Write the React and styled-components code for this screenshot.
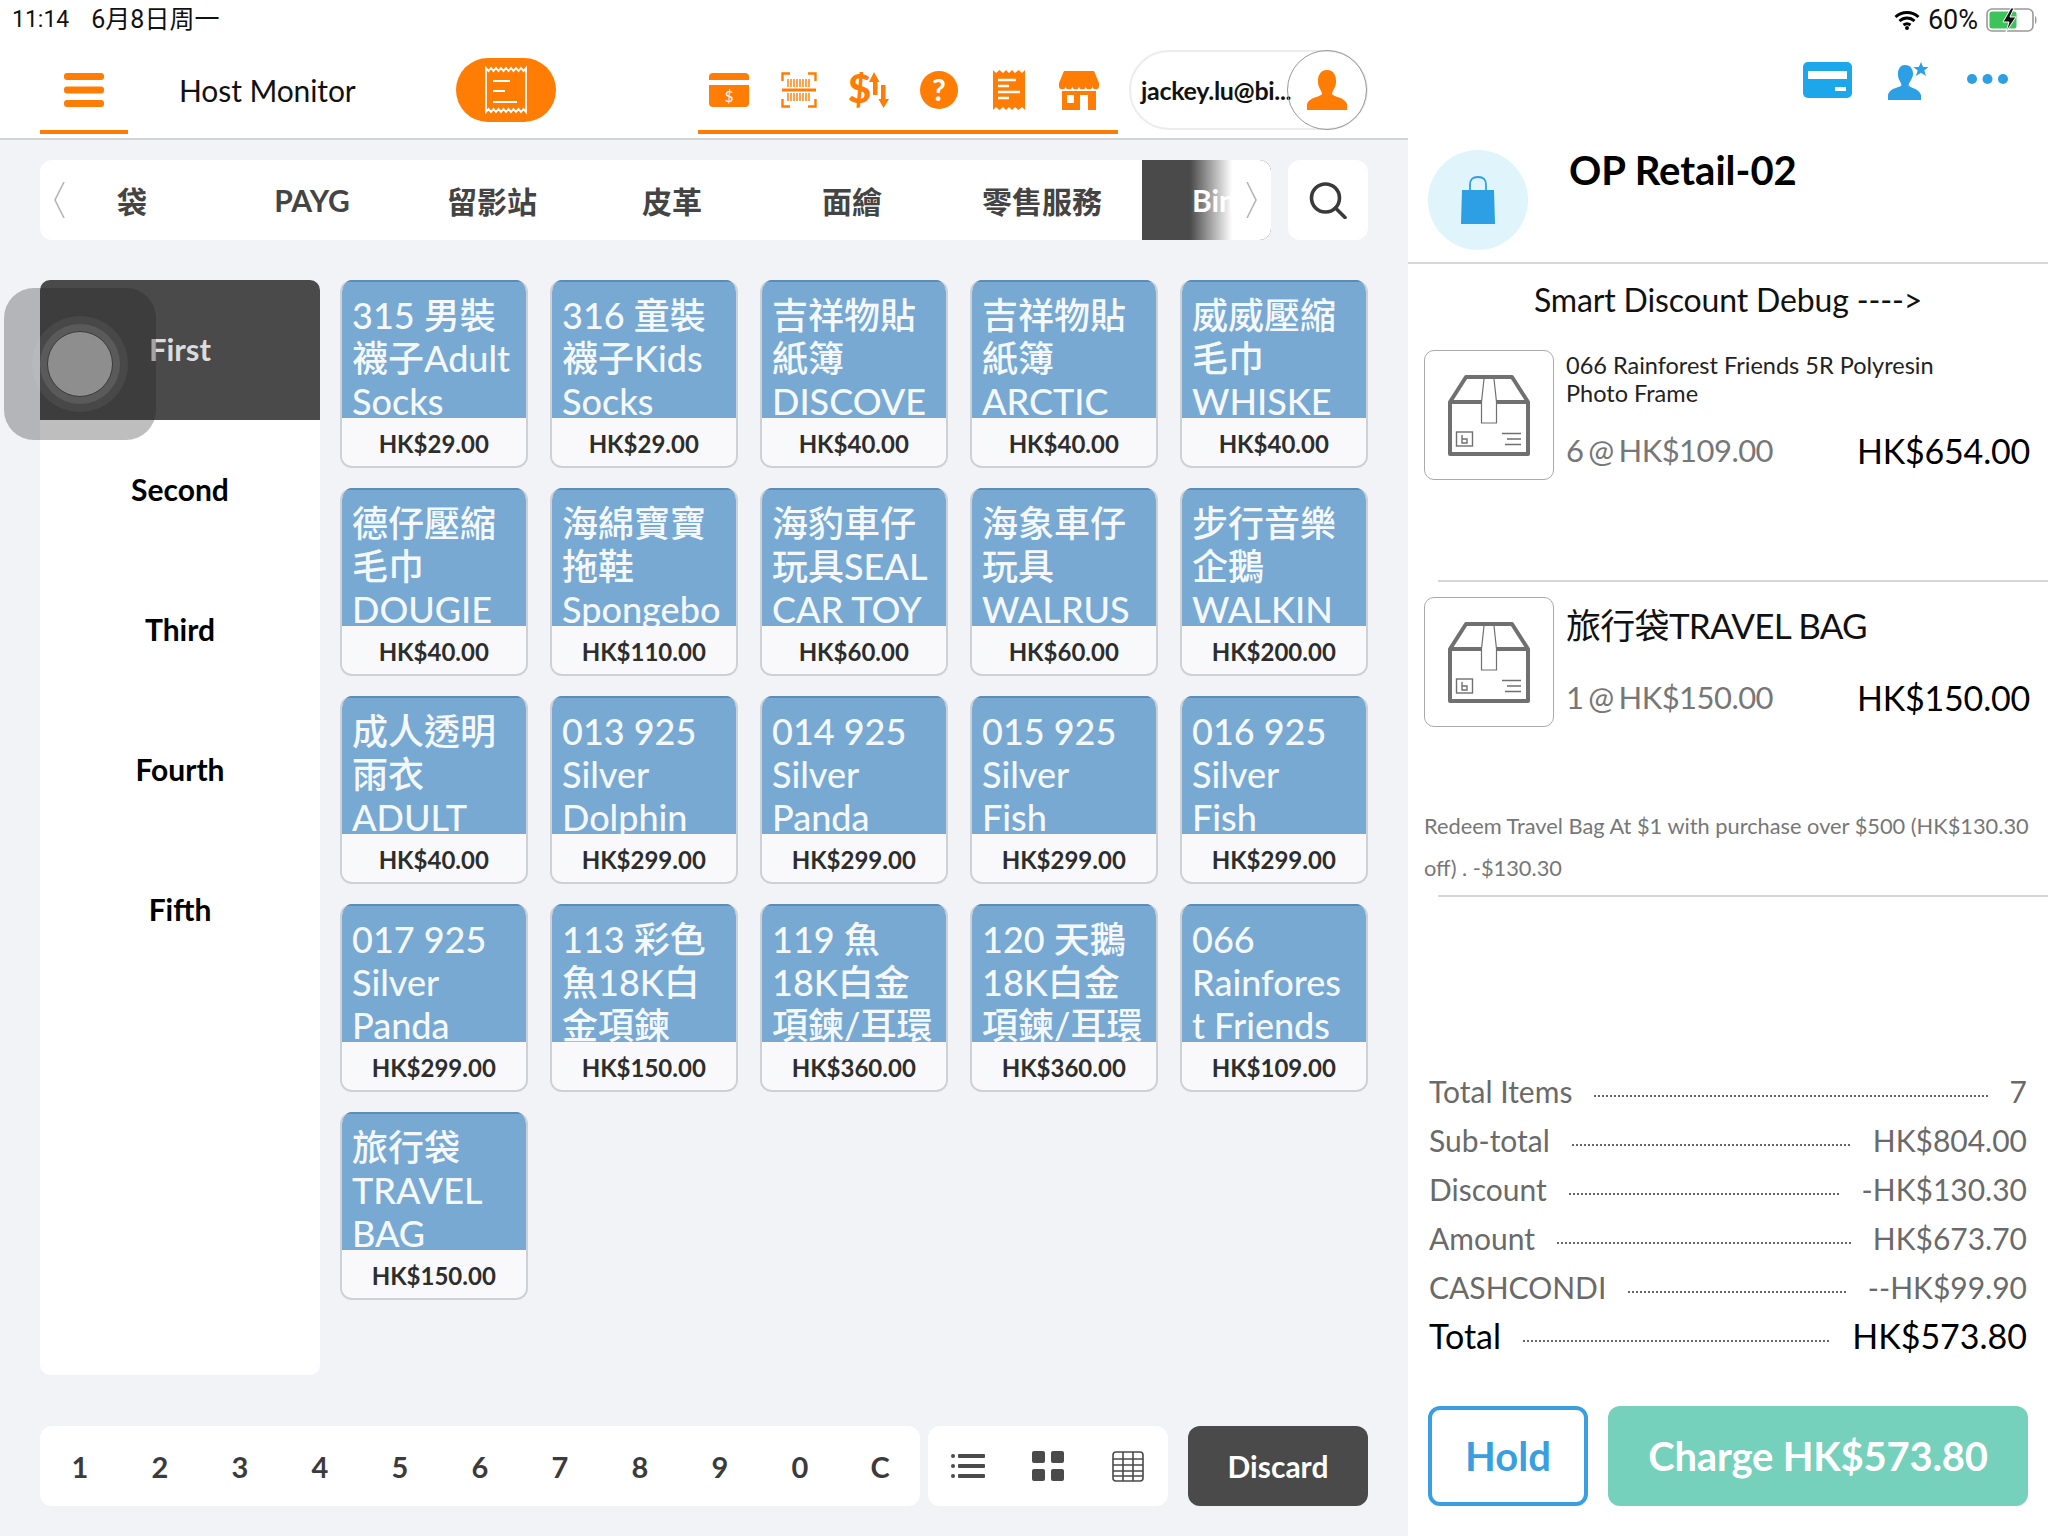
import React from 'react';
import styled, { createGlobalStyle } from 'styled-components';

const FONT = `"Lato", "Noto Sans CJK TC", sans-serif`;
const ORANGE = '#ff7c05';
const BLUE = '#2c9fe5';

const Global = createGlobalStyle`
  html, body { margin: 0; padding: 0; background: #fff; }
  body { font-family: ${FONT}; }
  * { box-sizing: border-box; }
`;

const Screen = styled.div`
  width: 2048px; height: 1536px; background: #fff; display: flex; flex-direction: column; overflow: hidden; position: relative;
`;
const StatusBar = styled.div`
  height: 40px; flex: none; display: flex; align-items: center; justify-content: space-between; padding: 0 10px 0 12px;
  font-family: "Roboto", "Noto Sans CJK SC", sans-serif; font-size: 23px; color: #111;
`;
const StatusLeft = styled.div`display: flex; gap: 22px; align-items: center; line-height: 30px;`;
const StatusDate = styled.span`font-size: 25px;`;
const StatusRight = styled.div`display: flex; align-items: center; gap: 8px; font-size: 27px;`;
const Body = styled.div`flex: 1; display: grid; grid-template-columns: 1408px 640px; min-height: 0;`;
const Left = styled.div`display: flex; flex-direction: column; background: #f1f3f7; min-height: 0;`;
const Header = styled.header`
  height: 100px; flex: none; background: #fff; border-bottom: 2px solid #d3d4d6; display: flex; padding: 0 0 4px 40px; position: relative;
`;
const HeaderTab = styled.div`
  height: 94px; flex: none; display: flex; align-items: center; justify-content: center; border-bottom: 4px solid ${ORANGE}; padding-top: 10px;
`;
const MenuTab = styled(HeaderTab)`width: 88px;`;
const HostTitle = styled.div`
  font-size: 30px; letter-spacing: -0.1px; color: #111; margin-left: 51px; width: 277px; height: 94px; line-height: 100px; flex: none; white-space: nowrap;
`;
const ReceiptPill = styled.div`
  width: 100px; height: 64px; margin-top: 18px; border-radius: 32px / 32px; background: ${ORANGE}; display: flex; align-items: center; justify-content: center; flex: none;
`;
const ToolTabs = styled(HeaderTab)`width: 420px; margin-left: 142px; justify-content: flex-start;`;
const ToolSlot = styled.div`width: 70px; padding-right: 8px; display: flex; justify-content: center; align-items: center; flex: none;`;
const UserPill = styled.div`
  position: relative; width: 239px; height: 80px; margin-top: 10px; margin-left: 11px; border: 2px solid #ececec; border-radius: 40px; flex: none;
  display: flex; align-items: center; padding-left: 10px; font-size: 25px; font-weight: 700; letter-spacing: -0.3px; color: #111; white-space: nowrap;
`;
const Avatar = styled.div`
  position: absolute; right: -1px; top: -2px; width: 80px; height: 80px; border-radius: 50%; border: 1px solid #999; display: flex; align-items: center; justify-content: center;
`;

const CategoryRow = styled.div`display: flex; gap: 17px; padding: 20px 40px 0; flex: none;`;
const CategoryBar = styled.div`
  position: relative; width: 1231px; height: 80px; background: #fff; border-radius: 12px; overflow: hidden; display: flex; padding-left: 2px;
`;
const CatTab = styled.div`
  height: 80px; min-width: ${p => (p.$wide ? 200 : 180)}px; flex: none; display: flex; align-items: center; justify-content: ${p => (p.$active ? 'flex-start' : 'center')};
  padding-left: ${p => (p.$active ? 50 : 0)}px; font-size: 30px; font-weight: 700; color: ${p => (p.$active ? '#fff' : '#444')}; background: ${p => (p.$active ? '#4a4a4a' : 'transparent')};
`;
const Fade = styled.div`
  position: absolute; right: 0; top: 0; bottom: 0; width: 81px; background: linear-gradient(90deg, rgba(255,255,255,0), #fff 52%); display: flex; align-items: center; justify-content: flex-end; padding-right: 14px;
`;
const LeftChev = styled.div`position: absolute; left: 14px; top: 22px; display: flex;`;
const SearchBox = styled.div`width: 80px; height: 80px; background: #fff; border-radius: 12px; display: flex; align-items: center; justify-content: center; flex: none;`;

const Middle = styled.div`display: flex; gap: 20px; padding: 40px 40px 0; flex: none;`;
const Sidebar = styled.nav`width: 280px; height: 1095px; background: #fff; border-radius: 10px; overflow: hidden; flex: none;`;
const SideItem = styled.div`
  height: 140px; display: flex; align-items: center; justify-content: center; font-size: ${p => (p.$active ? 31 : 30)}px; font-weight: 700; padding-bottom: 2px;
  color: ${p => (p.$active ? '#dcdcdc' : '#000')}; background: ${p => (p.$active ? '#4a4a4a' : 'transparent')};
`;
const Grid = styled.div`
  width: 1027.5px; display: grid; grid-template-columns: repeat(5, 187.5px); grid-auto-rows: 187.5px; column-gap: 22.5px; row-gap: 20.5px; align-content: start;
`;
const Card = styled.div`
  border-radius: 12px; overflow: hidden; background: #f8f9fb; border: 2px solid #cdd0d4; border-top: 0; position: relative; margin: 0;
`;
const CardName = styled.div`
  height: 138px; background: #77a9d3; border-top: 2px solid #5d8db5; margin: 0 -2px; padding: 12px 0 0 12px; color: #f4f8fb; font-size: 36px; font-weight: 500; line-height: 43px;
`;
const NameLine = styled.div`white-space: nowrap;`;
const Price = styled.div`
  position: relative; height: 47px; display: flex; align-items: center; justify-content: center; background: rgba(248,249,251,.78); font-size: 24px; font-weight: 700; color: #2d2d2d; margin: 0 -2px; padding-top: 3px;
`;

const BottomBar = styled.div`display: flex; padding: 51px 40px 0; flex: none;`;
const NumPad = styled.div`
  width: 880px; height: 80px; background: #fff; border-radius: 12px; display: grid; grid-template-columns: repeat(11, 80px); flex: none;
`;
const Digit = styled.div`display: flex; align-items: center; justify-content: center; font-size: 29px; font-weight: 700; color: #3b3b3b;`;
const ViewPad = styled.div`width: 240px; height: 80px; margin-left: 8px; background: #fff; border-radius: 12px; display: flex; flex: none;`;
const ViewSlot = styled.div`width: 80px; display: flex; align-items: center; justify-content: center;`;
const DiscardBtn = styled.div`
  width: 180px; height: 80px; margin-left: 20px; background: #4a4a4a; border-radius: 12px; color: #fff; font-size: 30px; font-weight: 700; display: flex; align-items: center; justify-content: center; flex: none;
`;

const Right = styled.aside`display: flex; flex-direction: column; background: #fff; min-height: 0;`;
const RightTools = styled.div`height: 110px; flex: none; position: relative; display: flex; padding-top: 22px;`;
const ToolCard = styled.div`margin-left: 395px; width: 49px; display: flex;`;
const ToolUser = styled.div`margin-left: 36px; width: 46px; display: flex;`;
const ToolDots = styled.div`margin-left: 33px; display: flex; padding-top: 11px;`;
const OrderHead = styled.div`height: 114px; flex: none; border-bottom: 2px solid #d6d6d6; padding-left: 20px; display: flex; gap: 41px;`;
const BagCircle = styled.div`width: 100px; height: 100px; border-radius: 50%; background: #e0f5fb; display: flex; align-items: center; justify-content: center; flex: none;`;
const OrderTitle = styled.h1`margin: 0; font-size: 40px; font-weight: 700; line-height: 40px; color: #000;`;
const DebugLine = styled.div`height: 86px; flex: none; padding-top: 16px; text-align: center; font-size: 32px; line-height: 40px; color: #111; letter-spacing: -0.15px;`;
const Item = styled.div`display: flex; gap: 12px; padding: 0 18px 0 16px; height: ${p => p.$h}px; flex: none;`;
const Thumb = styled.div`width: 130px; height: 130px; border: 1px solid #aaa; border-radius: 10px; display: flex; align-items: center; justify-content: center; flex: none;`;
const ItemInfo = styled.div`flex: 1; height: 122px; display: flex; flex-direction: column; justify-content: space-between;`;
const ItemName = styled.div`
  font-size: ${p => (p.$large ? 35 : 23.5)}px; line-height: ${p => (p.$large ? 40 : 28)}px; padding-top: ${p => (p.$large ? 8 : 1)}px; color: ${p => (p.$large ? '#111' : '#222')};
  letter-spacing: ${p => (p.$large ? -0.7 : 0)}px;
`;
const ItemFoot = styled.div`display: flex; justify-content: space-between; align-items: center; height: 44px;`;
const ItemQty = styled.div`font-size: 31px; color: #777; word-spacing: -2.5px; letter-spacing: -0.55px;`;
const ItemTotal = styled.div`font-size: 34px; color: #000; letter-spacing: -0.2px;`;
const Rule = styled.div`height: 2px; background: #d6d6d6; margin: ${p => p.$m}; flex: none;`;
const Promo = styled.div`padding: 0 10px 0 16px; font-size: 21.8px; line-height: 42px; color: #777; flex: none;`;
const Summary = styled.div`margin-top: auto; padding: 0 21px 0 21px; flex: none;`;
const SumRow = styled.div`
  height: 49px; display: flex; align-items: center; font-size: ${p => (p.$strong ? 34 : 30)}px; color: ${p => (p.$strong ? '#000' : '#6a6a6a')};
`;
const Leader = styled.div`
  flex: 1; height: 2px; margin: 10px 22px 0; background: repeating-linear-gradient(90deg, #666 0 2px, transparent 2px 4px);
`;
const Actions = styled.div`display: flex; gap: 20px; padding: 46px 20px 30px; flex: none;`;
const HoldBtn = styled.div`
  width: 160px; height: 100px; border: 4px solid #3a9fe0; border-radius: 12px; color: #3a9fe0; font-size: 40px; font-weight: 700; display: flex; align-items: center; justify-content: center; flex: none;
`;
const ChargeBtn = styled.div`
  flex: 1; height: 100px; border-radius: 12px; background: #75d1bc; color: #fff; font-size: 40px; font-weight: 700; letter-spacing: -0.2px; display: flex; align-items: center; justify-content: center;
`;

const Hamburger = () => (
  <svg width="40" height="34" viewBox="0 0 40 34" fill={ORANGE}>
    <rect x="0" y="0" width="40" height="7" rx="3" /><rect x="0" y="13.5" width="40" height="7" rx="3" /><rect x="0" y="27" width="40" height="7" rx="3" />
  </svg>
);
const zig = (y, up) => {
  let s = '';
  for (let i = 0; i < 8; i++) s += `L${1 + i * 5 + 2.5} ${up ? y - 3 : y + 3} L${1 + (i + 1) * 5} ${y} `;
  return s;
};
const ReceiptOutline = () => (
  <svg width="42" height="52" viewBox="0 0 42 52" fill="none" stroke="#fff" strokeWidth="1.8">
    <path d={`M1 4 ${zig(4, false)} V48 ${Array.from({ length: 8 }, (_, i) => `L${41 - i * 5 - 2.5} 45 L${41 - (i + 1) * 5} 48`).join(' ')} Z`} />
    <path d="M8 17H25M8 27H20M8 38H32" strokeWidth="2" />
  </svg>
);
const CashCard = () => (
  <svg width="40" height="34" viewBox="0 0 40 34">
    <rect width="40" height="34" rx="4" fill={ORANGE} />
    <rect x="0" y="7" width="40" height="5" fill="#fff" />
    <text x="20" y="29" textAnchor="middle" fontSize="15" fill="#fff" fontFamily="Lato">$</text>
  </svg>
);
const Scan = () => (
  <svg width="36" height="36" viewBox="0 0 36 36" fill="none" stroke={ORANGE} strokeWidth="2.4">
    <path d="M9 1.5H1.5V9M27 1.5H34.5V9M9 34.5H1.5V27M27 34.5H34.5V27" />
    <path d="M7 7V15M10 7V15M13 7V15M16 7V15M19 7V15M22 7V15M25 7V15M28 7V15M7 21V29M10 21V29M13 21V29M16 21V29M19 21V29M22 21V29M25 21V29M28 21V29" strokeWidth="1.4" />
    <path d="M1 18H35" strokeWidth="3" />
  </svg>
);
const Exchange = () => (
  <svg width="40" height="36" viewBox="0 0 40 36" fill={ORANGE}>
    <text x="-1" y="31" fontSize="40" fontWeight="900" fontFamily="Lato">$</text>
    <path d="M25 0L30.500 10H28.500V23H24V10H20ZM32 13H36.500V27H40L34.500 36L29.500 27H32Z" />
  </svg>
);
const Help = () => (
  <svg width="38" height="38" viewBox="0 0 38 38">
    <circle cx="19" cy="19" r="19" fill={ORANGE} />
    <text x="19" y="30" textAnchor="middle" fontSize="30" fontWeight="700" fill="#fff" fontFamily="Lato">?</text>
  </svg>
);
const Bill = () => (
  <svg width="32" height="40" viewBox="0 0 32 40">
    <path d="M0 0L3 3L6.5 0L10 3L13 0L16 3L19 0L22 3L25.5 0L29 3L32 0V40L29 37L25.5 40L22 37L19 40L16 37L13 40L10 37L6.5 40L3 37L0 40Z" fill={ORANGE} />
    <path d="M5 10H23M5 16H16M5 22H27M5 28H16" stroke="#fff" strokeWidth="2.4" />
  </svg>
);
const Shop = () => (
  <svg width="40" height="39" viewBox="0 0 40 39" fill={ORANGE}>
    <path d="M5 0H35L40 12V15H0V12Z" />
    <path d="M0 15a3.3 3.3 0 0 0 6.6 0a3.3 3.3 0 0 0 6.7 0a3.3 3.3 0 0 0 6.7 0a3.3 3.3 0 0 0 6.7 0a3.3 3.3 0 0 0 6.7 0a3.3 3.3 0 0 0 6.6 0Z" />
    <path fillRule="evenodd" d="M3 20H37V39H3ZM8 24V32H15V24ZM21 24V39H29V24Z" />
  </svg>
);
const Person = ({ color, star }) => (
  <svg width={star ? 46 : 40} height={star ? 38 : 40} viewBox={star ? '0 0 46 38' : '0 0 40 40'} fill={color}>
    {star ? (
      <>
        <path d="M17 3C11 3 9.500 9 10 14C10.500 18 13 20 13.500 23C13 26 2 25 0 33V38H33V33C31 26 21 26 20.500 23C21 20 24.500 17 25 13C25.500 8 23 3 17 3Z" />
        <path d="M33 0L35.200 5H40.500L36.300 8.500L38 14L33 10.800L28 14L29.700 8.500L25.500 5H30.800Z" />
      </>
    ) : (
      <path d="M20 0C13 0 10.500 6 11 13C11.500 18 14.500 20 15 24C14 27 2 27 0 34V40H40V34C38 27 26 27 25 24C25.500 20 28.500 18 29 13C29.500 6 27 0 20 0Z" />
    )}
  </svg>
);
const Chevron = ({ right }) => (
  <svg width="11" height="36" viewBox="0 0 11 36" fill="none" stroke="#b5b5b5" strokeWidth="1.6">
    <path d={right ? 'M1 0L10 18L1 36' : 'M10 0L1 18L10 36'} />
  </svg>
);
const SearchIcon = () => (
  <svg width="38" height="37" viewBox="0 0 38 37" fill="none" stroke="#3a3a3a" strokeWidth="3.6">
    <circle cx="16.500" cy="16" r="14" /><path d="M26.500 26L36 35.500" strokeLinecap="round" />
  </svg>
);
const ListIcon = () => (
  <svg width="34" height="26" viewBox="0 0 34 26" fill="#4a4a4a">
    <circle cx="2" cy="3" r="2" /><circle cx="2" cy="13" r="2" /><circle cx="2" cy="23" r="2" />
    <rect x="7" y="1" width="27" height="4" rx="1" /><rect x="7" y="11" width="27" height="4" rx="1" /><rect x="7" y="21" width="27" height="4" rx="1" />
  </svg>
);
const TilesIcon = () => (
  <svg width="32" height="30" viewBox="0 0 32 30" fill="#4a4a4a">
    <rect width="13" height="12" rx="2" /><rect x="19" width="13" height="12" rx="2" /><rect y="18" width="13" height="12" rx="2" /><rect x="19" y="18" width="13" height="12" rx="2" />
  </svg>
);
const TableIcon = () => (
  <svg width="32" height="31" viewBox="0 0 32 31" fill="none" stroke="#4a4a4a" strokeWidth="1.6">
    <rect x="1" y="1" width="30" height="29" rx="3" />
    <path d="M1 8H31M1 14H31M1 20H31M1 25H31M11 1V30M21 1V30" />
  </svg>
);
const WifiIcon = () => (
  <svg width="26" height="20" viewBox="0 0 26 20" fill="none" stroke="#000" strokeWidth="3">
    <path d="M1.500 7C8 1 18 1 24.500 7M5.500 11C10 7 16 7 20.500 11M9.500 15C11.500 13.500 14.500 13.500 16.500 15" />
    <circle cx="13" cy="18" r="2" fill="#000" stroke="none" />
  </svg>
);
const BatteryIcon = () => (
  <svg width="52" height="24" viewBox="0 0 52 24">
    <rect x="1" y="1" width="46" height="22" rx="5" fill="none" stroke="#999" strokeWidth="1.6" />
    <rect x="3.500" y="3.500" width="27" height="17" rx="2.500" fill="#3cc45a" />
    <path d="M49 8c2 1 2 7 0 8Z" fill="#999" />
    <path d="M25 0L17 14H23L20 24L30 9H24L28 0Z" fill="#111" stroke="#fff" strokeWidth="1" />
  </svg>
);
const BlueCard = () => (
  <svg width="49" height="36" viewBox="0 0 49 36">
    <rect width="49" height="36" rx="5" fill="#1ba7ea" />
    <rect x="5" y="9" width="39" height="8" fill="#fff" />
    <rect x="32" y="25" width="11" height="4" fill="#fff" />
  </svg>
);
const Dots = () => (
  <svg width="41" height="12" viewBox="0 0 41 12" fill={BLUE}>
    <circle cx="5" cy="6" r="5" /><circle cx="20.500" cy="6" r="5" /><circle cx="36" cy="6" r="5" />
  </svg>
);
const Bag = () => (
  <svg width="34" height="48" viewBox="0 0 34 48">
    <path d="M9 15V9C9 3 11.500 1 17 1C22.500 1 25 3 25 9V15" fill="none" stroke={BLUE} strokeWidth="1.800" />
    <path d="M1 14H33L34 48H0Z" fill={BLUE} />
  </svg>
);
const BoxIcon = () => (
  <svg width="82" height="81" viewBox="0 0 82 81" fill="none" stroke="#707070" strokeWidth="4">
    <path d="M2 27L18 2H64L80 27V79H2ZM2 27H80" strokeLinejoin="round" />
    <path d="M36 4L33.500 27V48H48.500V27L46 4" fill="#fff" strokeWidth="1.200" />
    <rect x="8.500" y="57" width="16" height="14" strokeWidth="1.400" />
    <path d="M14 60V68H19V64H14" strokeWidth="1.400" />
    <path d="M54 58.500H73M59 64H73M57 69.500H73" strokeWidth="1.400" />
  </svg>
);

const TABS = ['袋', 'PAYG', '留影站', '皮革', '面繪'];
const SIDE = ['Second', 'Third', 'Fourth', 'Fifth'];
const PRODUCTS = [
  [['315 男裝', '襪子Adult', 'Socks'], 'HK$29.00'],
  [['316 童裝', '襪子Kids', 'Socks'], 'HK$29.00'],
  [['吉祥物貼', '紙簿', 'DISCOVE', 'RY'], 'HK$40.00'],
  [['吉祥物貼', '紙簿', 'ARCTIC', 'SEAL'], 'HK$40.00'],
  [['威威壓縮', '毛巾', 'WHISKE', 'R'], 'HK$40.00'],
  [['德仔壓縮', '毛巾', 'DOUGIE', 'CARE'], 'HK$40.00'],
  [['海綿寶寶', '拖鞋', 'Spongebo', 'b'], 'HK$110.00'],
  [['海豹車仔', '玩具SEAL', 'CAR TOY'], 'HK$60.00'],
  [['海象車仔', '玩具', 'WALRUS', 'CAR TOY'], 'HK$60.00'],
  [['步行音樂', '企鵝', 'WALKIN', 'G'], 'HK$200.00'],
  [['成人透明', '雨衣', 'ADULT', 'RAINCOA'], 'HK$40.00'],
  [['013 925', 'Silver', 'Dolphin', 'Keychain'], 'HK$299.00'],
  [['014 925', 'Silver', 'Panda', 'Sharp'], 'HK$299.00'],
  [['015 925', 'Silver', 'Fish', 'Keychain'], 'HK$299.00'],
  [['016 925', 'Silver', 'Fish', 'Keychain'], 'HK$299.00'],
  [['017 925', 'Silver', 'Panda', 'Sharp'], 'HK$299.00'],
  [['113 彩色', '魚18K白', '金項鍊', 'g'], 'HK$150.00'],
  [['119 魚', '18K白金', '項鍊/耳環', '2'], 'HK$360.00'],
  [['120 天鵝', '18K白金', '項鍊/耳環', '2'], 'HK$360.00'],
  [['066', 'Rainfores', 't Friends', '5'], 'HK$109.00'],
  [['旅行袋', 'TRAVEL', 'BAG'], 'HK$150.00'],
];
const SUMMARY = [
  ['Total Items', '7'],
  ['Sub-total', 'HK$804.00'],
  ['Discount', '-HK$130.30'],
  ['Amount', 'HK$673.70'],
  ['CASHCONDI', '--HK$99.90'],
];

const TouchOverlay = styled.div`
  position: absolute; left: 4px; top: 288px; width: 152px; height: 152px; border-radius: 30px; background: rgba(30,30,30,.29); display: flex; align-items: center; justify-content: center;
`;
const Ring = styled.div`
  width: ${p => p.$s}px; height: ${p => p.$s}px; border-radius: 50%; background: ${p => p.$c}; border: ${p => p.$b || 'none'}; display: flex; align-items: center; justify-content: center;
`;

export default function App() {
  return (
    <Screen>
      <Global />
      <StatusBar>
        <StatusLeft><span>11:14</span><StatusDate>6月8日周一</StatusDate></StatusLeft>
        <StatusRight><WifiIcon /><span>60%</span><BatteryIcon /></StatusRight>
      </StatusBar>
      <Body>
        <Left>
          <Header>
            <MenuTab><Hamburger /></MenuTab>
            <HostTitle>Host Monitor</HostTitle>
            <ReceiptPill><ReceiptOutline /></ReceiptPill>
            <ToolTabs>
              <ToolSlot><CashCard /></ToolSlot>
              <ToolSlot><Scan /></ToolSlot>
              <ToolSlot><Exchange /></ToolSlot>
              <ToolSlot><Help /></ToolSlot>
              <ToolSlot><Bill /></ToolSlot>
              <ToolSlot><Shop /></ToolSlot>
            </ToolTabs>
            <UserPill>
              jackey.lu@bi...
              <Avatar><Person color={ORANGE} /></Avatar>
            </UserPill>
          </Header>
          <CategoryRow>
            <CategoryBar>
              {TABS.map(t => <CatTab key={t}>{t}</CatTab>)}
              <CatTab $wide>零售服務</CatTab>
              <CatTab $active>Bin</CatTab>
              <LeftChev><Chevron /></LeftChev>
              <Fade><Chevron right /></Fade>
            </CategoryBar>
            <SearchBox><SearchIcon /></SearchBox>
          </CategoryRow>
          <Middle>
            <Sidebar>
              <SideItem $active>First</SideItem>
              {SIDE.map(s => <SideItem key={s}>{s}</SideItem>)}
            </Sidebar>
            <Grid>
              {PRODUCTS.map(([lines, price], i) => (
                <Card key={i}>
                  <CardName>{lines.map((l, j) => <NameLine key={j}>{l}</NameLine>)}</CardName>
                  <Price>{price}</Price>
                </Card>
              ))}
            </Grid>
          </Middle>
          <BottomBar>
            <NumPad>
              {['1', '2', '3', '4', '5', '6', '7', '8', '9', '0', 'C'].map(d => <Digit key={d}>{d}</Digit>)}
            </NumPad>
            <ViewPad>
              <ViewSlot><ListIcon /></ViewSlot>
              <ViewSlot><TilesIcon /></ViewSlot>
              <ViewSlot><TableIcon /></ViewSlot>
            </ViewPad>
            <DiscardBtn>Discard</DiscardBtn>
          </BottomBar>
        </Left>
        <Right>
          <RightTools>
            <ToolCard><BlueCard /></ToolCard>
            <ToolUser><Person color={BLUE} star /></ToolUser>
            <ToolDots><Dots /></ToolDots>
          </RightTools>
          <OrderHead>
            <BagCircle><Bag /></BagCircle>
            <OrderTitle>OP Retail-02</OrderTitle>
          </OrderHead>
          <DebugLine>Smart Discount Debug ----&gt;</DebugLine>
          <Item $h={230}>
            <Thumb><BoxIcon /></Thumb>
            <ItemInfo>
              <ItemName>066 Rainforest Friends 5R Polyresin<br />Photo Frame</ItemName>
              <ItemFoot><ItemQty>6 @ HK$109.00</ItemQty><ItemTotal>HK$654.00</ItemTotal></ItemFoot>
            </ItemInfo>
          </Item>
          <Rule $m="0 0 15px 30px" />
          <Item $h={208}>
            <Thumb><BoxIcon /></Thumb>
            <ItemInfo>
              <ItemName $large>旅行袋TRAVEL BAG</ItemName>
              <ItemFoot><ItemQty>1 @ HK$150.00</ItemQty><ItemTotal>HK$150.00</ItemTotal></ItemFoot>
            </ItemInfo>
          </Item>
          <Promo>Redeem Travel Bag At $1 with purchase over $500 (HK$130.30 off) . -$130.30</Promo>
          <Rule $m="6px 0 0 30px" />
          <Summary>
            {SUMMARY.map(([k, v]) => (
              <SumRow key={k}><span>{k}</span><Leader /><span>{v}</span></SumRow>
            ))}
            <SumRow $strong><span>Total</span><Leader /><span>HK$573.80</span></SumRow>
          </Summary>
          <Actions>
            <HoldBtn>Hold</HoldBtn>
            <ChargeBtn>Charge HK$573.80</ChargeBtn>
          </Actions>
        </Right>
      </Body>
      <TouchOverlay>
        <Ring $s={96} $c="rgba(255,255,255,.06)">
          <Ring $s={80} $c="rgba(255,255,255,.1)">
            <Ring $s={66} $c="#8e8e8e" $b="1px solid #3a3a3a" />
          </Ring>
        </Ring>
      </TouchOverlay>
    </Screen>
  );
}
